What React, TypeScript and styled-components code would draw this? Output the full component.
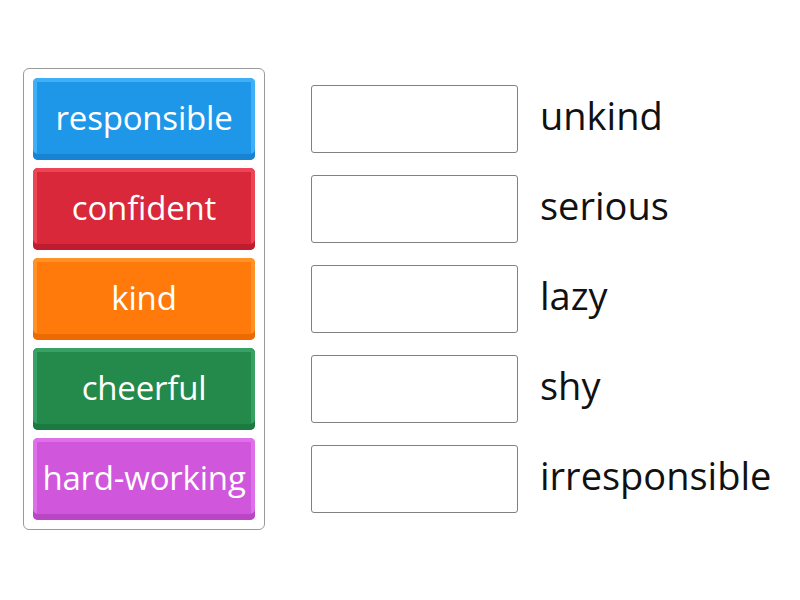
import { createGlobalStyle, styled } from "styled-components"

type Tone = {
  face: string
  edge: string
  shade: string
}

const tones: Record<string, Tone> = {
  blue: { face: "#1f97e8", edge: "#3fb0f8", shade: "#1883d2" },
  red: { face: "#d8283a", edge: "#ee4556", shade: "#bf1d2f" },
  orange: { face: "#ff7a0a", edge: "#ff9227", shade: "#ec6a02" },
  green: { face: "#248a4c", edge: "#37a263", shade: "#1b7a3f" },
  purple: { face: "#d056db", edge: "#e070ea", shade: "#b946c4" },
}

const words = [
  { text: "responsible", tone: "blue" },
  { text: "confident", tone: "red" },
  { text: "kind", tone: "orange" },
  { text: "cheerful", tone: "green" },
  { text: "hard-working", tone: "purple" },
]

const targets = ["unkind", "serious", "lazy", "shy", "irresponsible"]

const GlobalStyle = createGlobalStyle`
  html, body {
    margin: 0;
    padding: 0;
    background: #ffffff;
  }
  body {
    width: 800px;
    height: 600px;
    overflow: hidden;
    font-family: "Open Sans", Lato, sans-serif;
  }
`

const Page = styled.div`
  display: flex;
  align-items: flex-start;
  padding: 68px 0 0 23px;
`

const Tray = styled.div`
  display: flex;
  flex-direction: column;
  gap: 8px;
  width: 222px;
  padding: 9px;
  border: 1px solid #9a9a9a;
  border-radius: 6px;
`

const Tile = styled.div<{ $tone: Tone }>`
  display: flex;
  align-items: center;
  justify-content: center;
  height: 82px;
  border-radius: 5px;
  background: ${(p) => p.$tone.face};
  box-shadow:
    inset 0 -6px 0 ${(p) => p.$tone.shade},
    inset 0 4px 0 ${(p) => p.$tone.edge},
    inset 4px 0 0 ${(p) => p.$tone.edge},
    inset -4px 0 0 ${(p) => p.$tone.edge};
  color: #ffffff;
  font-size: 33px;
  letter-spacing: -0.2px;
  padding-bottom: 4px;
  box-sizing: border-box;
  white-space: nowrap;
`

const Board = styled.div`
  display: flex;
  flex-direction: column;
  gap: 22px;
  margin-left: 46px;
  padding-top: 17px;
`

const Row = styled.div`
  display: flex;
  align-items: center;
  gap: 22px;
`

const Slot = styled.div`
  width: 205px;
  height: 66px;
  border: 1px solid #808080;
  border-radius: 3px;
`

const Label = styled.span`
  font-size: 38px;
  color: #111111;
  padding-bottom: 8px;
`

export default function App() {
  return (
    <>
      <GlobalStyle />
      <Page>
        <Tray>
          {words.map((w) => (
            <Tile key={w.text} $tone={tones[w.tone]}>
              {w.text}
            </Tile>
          ))}
        </Tray>
        <Board>
          {targets.map((t) => (
            <Row key={t}>
              <Slot />
              <Label>{t}</Label>
            </Row>
          ))}
        </Board>
      </Page>
    </>
  )
}
